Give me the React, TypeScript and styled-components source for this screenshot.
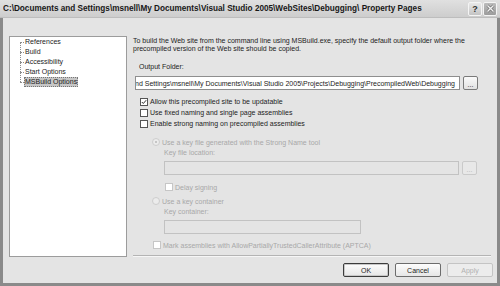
import React from 'react';
import styled, { createGlobalStyle } from 'styled-components';

const GlobalStyle = createGlobalStyle`
  html, body {
    margin: 0;
    padding: 0;
    background: #e4e4e4;
  }
  body {
    font-family: "Liberation Sans", Arial, sans-serif;
    font-size: 7px;
    color: #1c1c1c;
  }
`;

const Window = styled.div`
  width: 500px;
  height: 286px;
  display: flex;
  flex-direction: column;
  overflow: hidden;
  background: #e4e4e4;
`;

const TitleBar = styled.div`
  height: 18px;
  flex: none;
  display: flex;
  align-items: center;
  padding: 0 3px 0 3px;
  background: linear-gradient(#e0e0e0, #cdcdcd);
  border-bottom: 1px solid #bdbdbd;
  box-sizing: border-box;
`;

const Title = styled.div`
  flex: 1;
  font-size: 8.2px;
  font-weight: bold;
  color: #181818;
  white-space: nowrap;
  overflow: hidden;
`;

const CaptionButton = styled.div<{ $close?: boolean }>`
  width: 14px;
  height: 14px;
  box-sizing: border-box;
  border: 1px solid #f4f4f4;
  border-radius: 2px;
  background: ${(p) => (p.$close ? 'linear-gradient(#bcbcbc, #9c9c9c)' : 'linear-gradient(#e8e8e8, #c4c4c4)')};
  display: flex;
  align-items: center;
  justify-content: center;
  font-weight: bold;
  font-size: 9px;
  color: #333;
  margin-left: 1px;
`;

const Frame = styled.div`
  flex: 1;
  display: flex;
  flex-direction: column;
  border: 3px solid #8a8a8a;
  border-top: none;
  padding: 18px 6px 4px 6px;
`;

const Main = styled.div`
  display: flex;
  height: 221px;
  gap: 6px;
`;

const TreePanel = styled.div`
  width: 118px;
  box-sizing: border-box;
  background: #fff;
  border: 1px solid #9c9c9c;
`;

const TreeList = styled.div`
  position: relative;
  margin-left: 10px;
  &::before {
    content: '';
    position: absolute;
    left: 0;
    top: 5px;
    height: 40px;
    border-left: 1px dotted #8c8c8c;
  }
`;

const TreeItem = styled.div<{ $selected?: boolean }>`
  position: relative;
  height: 10px;
  line-height: 10px;
  margin-left: 4px;
  padding: 0 1px;
  display: table;
  box-sizing: border-box;
  background: ${(p) => (p.$selected ? '#c6c6c6' : 'transparent')};
  outline: ${(p) => (p.$selected ? '1px dotted #777' : 'none')};
  outline-offset: -1px;
  &::before {
    content: '';
    position: absolute;
    left: -4px;
    top: 5px;
    width: 4px;
    border-top: 1px dotted #8c8c8c;
  }
`;

const Content = styled.div`
  flex: 1;
  display: flex;
  flex-direction: column;
`;

const Description = styled.div`
  line-height: 8px;
  margin-top: 1px;
`;

const Label = styled.div<{ $indent: number; $top: number; $disabled?: boolean }>`
  height: 8px;
  line-height: 8px;
  margin-left: ${(p) => p.$indent}px;
  margin-top: ${(p) => p.$top}px;
  color: ${(p) => (p.$disabled ? '#a8a8a8' : 'inherit')};
`;

const FieldRow = styled.div<{ $indent: number; $top: number }>`
  display: flex;
  gap: 3px;
  height: 14px;
  margin-left: ${(p) => p.$indent}px;
  margin-top: ${(p) => p.$top}px;
`;

const TextBox = styled.div<{ $width: number; $disabled?: boolean }>`
  width: ${(p) => p.$width}px;
  height: 14px;
  box-sizing: border-box;
  border: 1px solid ${(p) => (p.$disabled ? '#c2c2c2' : '#8e8e8e')};
  background: ${(p) => (p.$disabled ? '#e4e4e4' : '#fff')};
  display: flex;
  justify-content: flex-end;
  align-items: center;
  overflow: hidden;
  white-space: nowrap;
  padding-right: 4px;
`;

const BrowseButton = styled.div<{ $disabled?: boolean }>`
  width: 15px;
  height: 14px;
  box-sizing: border-box;
  border: 1px solid ${(p) => (p.$disabled ? '#cacaca' : '#7a7a7a')};
  border-radius: 2px;
  background: ${(p) => (p.$disabled ? '#e8e8e8' : 'linear-gradient(#fafafa, #e2e2e2)')};
  color: ${(p) => (p.$disabled ? '#b4b4b4' : '#222')};
  display: flex;
  align-items: flex-end;
  justify-content: center;
  line-height: 9px;
`;

const OptionRow = styled.label<{ $indent: number; $top: number; $h: number; $disabled?: boolean }>`
  display: flex;
  align-items: center;
  gap: 2px;
  height: ${(p) => p.$h}px;
  margin-left: ${(p) => p.$indent}px;
  margin-top: ${(p) => p.$top}px;
  color: ${(p) => (p.$disabled ? '#a8a8a8' : 'inherit')};
  white-space: nowrap;
`;

const Box = styled.span<{ $disabled?: boolean }>`
  width: 8px;
  height: 8px;
  box-sizing: border-box;
  border: 1px solid ${(p) => (p.$disabled ? '#c6c6c6' : '#555')};
  background: #fff;
  display: flex;
  align-items: center;
  justify-content: center;
  flex: none;
`;

const Radio = styled.span<{ $checked?: boolean }>`
  width: 8px;
  height: 8px;
  box-sizing: border-box;
  border-radius: 50%;
  border: 1px solid #cdcdcd;
  background: #ececec;
  display: flex;
  align-items: center;
  justify-content: center;
  flex: none;
  &::after {
    content: '';
    width: 2px;
    height: 2px;
    border-radius: 50%;
    background: ${(p) => (p.$checked ? '#b8b8b8' : 'transparent')};
  }
`;

const Separator = styled.div`
  margin-top: auto;
  height: 0;
  border-top: 1px solid #b4b4b4;
  border-bottom: 1px solid #f6f6f6;
`;

const Footer = styled.div`
  display: flex;
  justify-content: flex-end;
  gap: 6px;
  margin-top: 6px;
  margin-right: -2px;
`;

const DialogButton = styled.div<{ $default?: boolean; $disabled?: boolean }>`
  width: 46px;
  height: 14px;
  box-sizing: border-box;
  border: 1px solid ${(p) => (p.$disabled ? '#c4c4c4' : p.$default ? '#3c3c3c' : '#6c6c6c')};
  box-shadow: ${(p) => (p.$default ? 'inset 0 0 0 1px #c8c8c8' : 'none')};
  border-radius: 2px;
  background: ${(p) => (p.$disabled ? '#ececec' : 'linear-gradient(#fdfdfd, #e6e6e6)')};
  color: ${(p) => (p.$disabled ? '#b0b0b0' : '#222')};
  display: flex;
  align-items: center;
  justify-content: center;
`;

const Check = () => (
  <svg width="6" height="6" viewBox="0 0 6 6">
    <path d="M0.8 3 L2.3 4.5 L5.2 1.2" fill="none" stroke="#333" strokeWidth="1" />
  </svg>
);

const CloseGlyph = () => (
  <svg width="9" height="9" viewBox="0 0 9 9">
    <path d="M1.5 1.5 L7.5 7.5 M7.5 1.5 L1.5 7.5" stroke="#6e6e6e" strokeWidth="2.6" />
    <path d="M1.5 1.5 L7.5 7.5 M7.5 1.5 L1.5 7.5" stroke="#f2f2f2" strokeWidth="1.4" />
  </svg>
);

const treeItems = ['References', 'Build', 'Accessibility', 'Start Options', 'MSBuild Options'];

export default function App() {
  return (
    <>
      <GlobalStyle />
      <Window>
        <TitleBar>
          <Title>
            C:\Documents and Settings\msnell\My Documents\Visual Studio 2005\WebSites\Debugging\ Property Pages
          </Title>
          <CaptionButton>?</CaptionButton>
          <CaptionButton $close>
            <CloseGlyph />
          </CaptionButton>
        </TitleBar>
        <Frame>
          <Main>
            <TreePanel>
              <TreeList>
                {treeItems.map((item, i) => (
                  <TreeItem key={item} $selected={i === treeItems.length - 1}>
                    {item}
                  </TreeItem>
                ))}
              </TreeList>
            </TreePanel>
            <Content>
              <Description>
                To build the Web site from the command line using MSBuild.exe, specify the default output folder where the
                <br />
                precompiled version of the Web site should be copied.
              </Description>
              <Label $indent={6} $top={10}>Output Folder:</Label>
              <FieldRow $indent={2} $top={5}>
                <TextBox $width={325}>
                  nd Settings\msnell\My Documents\Visual Studio 2005\Projects\Debugging\PrecompiledWeb\Debugging
                </TextBox>
                <BrowseButton>...</BrowseButton>
              </FieldRow>
              <OptionRow $indent={7} $top={6} $h={11}>
                <Box>
                  <Check />
                </Box>
                Allow this precompiled site to be updatable
              </OptionRow>
              <OptionRow $indent={7} $top={0} $h={11}>
                <Box />
                Use fixed naming and single page assemblies
              </OptionRow>
              <OptionRow $indent={7} $top={0} $h={11}>
                <Box />
                Enable strong naming on precompiled assemblies
              </OptionRow>
              <OptionRow $indent={19} $top={8} $h={10} $disabled>
                <Radio $checked />
                Use a key file generated with the Strong Name tool
              </OptionRow>
              <Label $indent={31} $top={2} $disabled>Key file location:</Label>
              <FieldRow $indent={31} $top={4}>
                <TextBox $width={295} $disabled />
                <BrowseButton $disabled>...</BrowseButton>
              </FieldRow>
              <OptionRow $indent={32} $top={7} $h={10} $disabled>
                <Box $disabled />
                Delay signing
              </OptionRow>
              <OptionRow $indent={19} $top={4} $h={10} $disabled>
                <Radio />
                Use a key container
              </OptionRow>
              <Label $indent={31} $top={2} $disabled>Key container:</Label>
              <FieldRow $indent={31} $top={4}>
                <TextBox $width={197} $disabled />
              </FieldRow>
              <OptionRow $indent={20} $top={6} $h={10} $disabled>
                <Box $disabled />
                Mark assemblies with AllowPartiallyTrustedCallerAttribute (APTCA)
              </OptionRow>
              <Separator />
            </Content>
          </Main>
          <Footer>
            <DialogButton $default>OK</DialogButton>
            <DialogButton>Cancel</DialogButton>
            <DialogButton $disabled>Apply</DialogButton>
          </Footer>
        </Frame>
      </Window>
    </>
  );
}
